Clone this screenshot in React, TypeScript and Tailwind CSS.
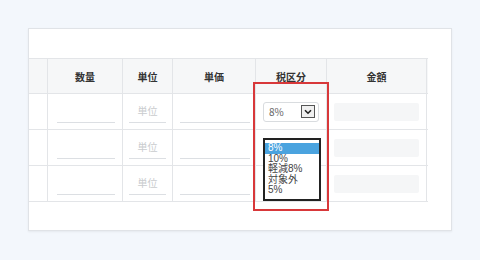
import React from "react";

const font = { fontFamily: '"Noto Sans CJK JP", "Noto Sans", sans-serif' };
const listFont = { fontFamily: '"Liberation Sans", "Noto Sans CJK JP", sans-serif' };

function Row({ first }: { first?: boolean }) {
  return (
    <div className="flex h-[36px] border-b border-[#e3e5e8]">
      <div className="w-[19px] border-r border-[#e3e5e8]" />
      <div className="w-[75px] border-r border-[#e3e5e8] flex items-end pb-[6px] pl-[9px]">
        <div className="w-[58px] border-b border-[#dcdfe3]" />
      </div>
      <div className="w-[50px] border-r border-[#e3e5e8] flex flex-col items-center justify-end pb-[6px]">
        <span className="text-[10px] leading-[12px] text-[#c9cbce] mb-[5px]">単位</span>
        <div className="w-[37px] border-b border-[#dcdfe3]" />
      </div>
      <div className="w-[83px] border-r border-[#e3e5e8] flex items-end pb-[6px] pl-[7px]">
        <div className="w-[70px] border-b border-[#dcdfe3]" />
      </div>
      <div className="w-[71px] border-r border-[#e3e5e8] flex items-center pl-[7px]">
        {first && (
          <div className="w-[56px] h-[20px] border border-[#d9dcdf] rounded-[3px] flex items-center justify-between pl-[5px] pr-[3px]">
            <span className="text-[10px] text-[#666]">8%</span>
            <div className="w-[14px] h-[13px] border border-[#555] bg-[#f0f0f0] flex items-center justify-center">
              <svg width="8" height="6" viewBox="0 0 8 6">
                <path d="M1 1.2 L4 4.2 L7 1.2" stroke="#222" strokeWidth="1.6" fill="none" />
              </svg>
            </div>
          </div>
        )}
      </div>
      <div className="w-[100px] border-r border-[#e3e5e8] flex items-center pl-[7px]">
        <div className="w-[85px] h-[18px] bg-[#f5f6f7] rounded-[2px]" />
      </div>
    </div>
  );
}

export default function App() {
  return (
    <div className="w-[480px] h-[260px] bg-[#f3f7fc] pt-[28px] pl-[28px]" style={font}>
      <div className="relative w-[424px] h-[203px] bg-white border border-[#e0e3e7] shadow-[0_1px_2px_rgba(0,0,0,0.06)] pt-[29px]">
        <div className="w-[399px]">
          <div className="flex h-[36px] bg-[#f6f7f8] border-y border-[#e3e5e8]">
            <div className="w-[19px] border-r border-[#e3e5e8]" />
            {[
              ["数量", "w-[75px]"],
              ["単位", "w-[50px]"],
              ["単価", "w-[83px]"],
              ["税区分", "w-[71px]"],
              ["金額", "w-[100px]"],
            ].map(([t, w]) => (
              <div
                key={t}
                className={`${w} border-r border-[#e3e5e8] flex items-center justify-center text-[10px] font-bold text-[#333]`}
              >
                {t}
              </div>
            ))}
          </div>
          <Row first />
          <Row />
          <Row />
        </div>

        {/* dropdown list */}
        <div
          className="absolute left-[234px] top-[109px] w-[58px] h-[63px] bg-white border-2 border-[#222] pt-[3px] text-[10px] leading-[10.5px] text-[#444]"
          style={listFont}
        >
          <div className="h-[10.5px] bg-[#4aa3df] text-white pl-[3px]">8%</div>
          <div className="h-[10.5px] pl-[3px]">10%</div>
          <div className="h-[10.5px] pl-[3px]">軽減8%</div>
          <div className="h-[10.5px] pl-[3px]">対象外</div>
          <div className="h-[10.5px] pl-[3px]">5%</div>
        </div>

        {/* red highlight */}
        <div className="absolute left-[224px] top-[53px] w-[76px] h-[129px] border-2 border-[#d8383a]" />
      </div>
    </div>
  );
}
